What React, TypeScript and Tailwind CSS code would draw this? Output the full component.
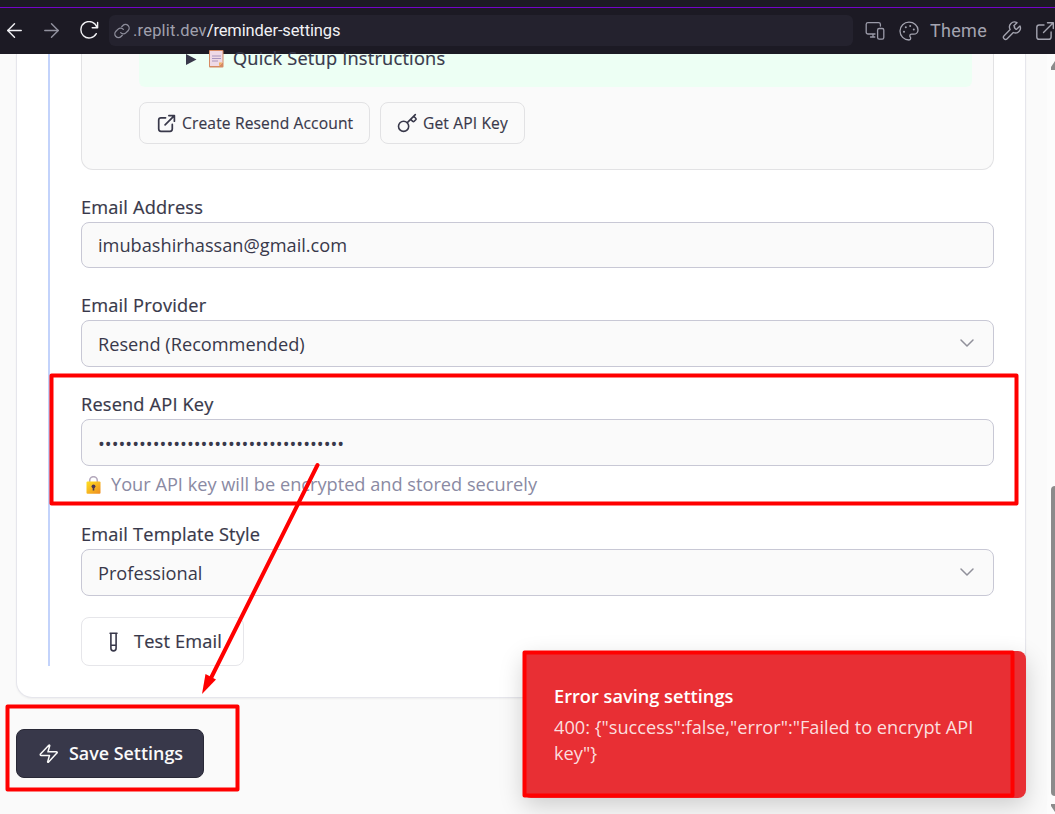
import type { ReactNode } from "react";
import {
  ArrowLeft,
  ArrowRight,
  ChevronDown,
} from "lucide-react";

function ReloadIcon() {
  return (
    <svg className="h-5 w-5" viewBox="0 0 20 20" fill="none" stroke="#f1f1f5" strokeWidth="1.4" strokeLinecap="round" strokeLinejoin="round">
      <path d="M18.600 1.500v5.200h-5.400M18 6.500A8.200 8.200 0 1 0 17.300 12.700" />
    </svg>
  );
}

function LinkIcon() {
  return (
    <svg className="h-4 w-4 shrink-0" viewBox="0 0 24 24" fill="none" stroke="#8c8c9a" strokeWidth="2" strokeLinecap="round">
      <path d="M10 14.5a5.4 5.4 0 0 0 7.8.3l3.3-3.3a5.4 5.4 0 0 0-7.7-7.7l-1.8 1.8" />
      <path d="M14 9.5a5.4 5.4 0 0 0-7.8-.3l-3.3 3.3a5.4 5.4 0 0 0 7.7 7.7l1.8-1.8" />
    </svg>
  );
}

function DevicesIcon() {
  return (
    <svg className="h-5 w-5 shrink-0" viewBox="0 0 20 20" fill="none" stroke="#9a9aa8" strokeWidth="1.3" strokeLinecap="round" strokeLinejoin="round">
      <path d="M10 13H3a1.8 1.8 0 0 1-1.8-1.8V3.3A1.8 1.8 0 0 1 3 1.6h10.600a1.800 1.800 0 0 1 1.800 1.700v1.700M8 13.2v2.6M5.500 16h4.300" />
      <rect x="12.600" y="7.500" width="6.200" height="10.600" rx="1.600" />
    </svg>
  );
}

function PaletteIcon() {
  return (
    <svg className="h-5 w-5 shrink-0" viewBox="0 0 20 20" fill="none" stroke="#a4a4b0" strokeWidth="1.3" strokeLinecap="round" strokeLinejoin="round">
      <path d="M10 1.200A8.900 8.900 0 0 0 1 10c0 5 4 9 9 9 1 0 1.700-.8 1.700-1.700 0-.5-.2-.9-.4-1.200-.3-.4-.5-.7-.5-1.200 0-1 .8-1.700 1.700-1.700h2.100c2.400 0 4.400-1.900 4.400-4.300C19 4.700 15 1.200 10 1.200Z" />
      <g fill="#a4a4b0" stroke="none">
        <circle cx="5" cy="10.800" r="1" />
        <circle cx="6.800" cy="6.300" r="1" />
        <circle cx="11.200" cy="5" r="1" />
        <circle cx="14.800" cy="8.600" r="1" />
      </g>
    </svg>
  );
}

function WrenchIcon() {
  return (
    <svg className="ml-[14px] h-5 w-5 shrink-0" viewBox="0 0 24 24" fill="none" stroke="currentColor" strokeWidth="1.600" strokeLinecap="round" strokeLinejoin="round">
      <path d="M15.500 7.300a1 1 0 0 0 0 1.400l1.200 1.200a1 1 0 0 0 1.400 0l3.800-3.800a6 6 0 0 1-8 7.900L6.500 21.500a2.100 2.100 0 0 1-3.700-3.700l7.300-7.400a6 6 0 0 1 8.200-8.200l-3.800 3.800Z" transform="translate(-.3 -.2)" />
    </svg>
  );
}

function ExternalIcon({ className }: { className: string }) {
  return (
    <svg className={className} viewBox="0 0 20 20" fill="none" stroke="currentColor" strokeLinecap="round" strokeLinejoin="round">
      <path d="M12.500 1.700h5.800v5.800M18 2 8.500 11.500M9 4H4.200a2.400 2.400 0 0 0-2.400 2.400v9.500a2.400 2.400 0 0 0 2.400 2.400h9.500a2.400 2.400 0 0 0 2.400-2.400V11" />
    </svg>
  );
}

function KeyIcon() {
  return (
    <svg className="h-5 w-5 shrink-0" viewBox="0 0 20 20" fill="none" stroke="currentColor" strokeWidth="1.600" strokeLinecap="round" strokeLinejoin="round">
      <circle cx="6.600" cy="13.300" r="5.100" />
      <path d="m10.300 9.600 8-8M13.600 6.300l2.100 2.100q.8.600 1.500-.1l1.500-1.500q.7-.8 0-1.500l-2-2" />
    </svg>
  );
}

function TubeIcon() {
  return (
    <svg className="h-5 w-3 shrink-0" viewBox="0 0 12 20" fill="none" stroke="currentColor" strokeWidth="1.600" strokeLinecap="round" strokeLinejoin="round">
      <path d="M3.100 1.200h6.900M3.900 1.500v14.800a2.600 2.600 0 0 0 5.200 0V1.500M3.900 13.300h5.200" />
    </svg>
  );
}

function BoltIcon() {
  return (
    <svg className="h-5 w-5 shrink-0" viewBox="0 0 20 20" fill="none" stroke="currentColor" strokeWidth="1.500" strokeLinejoin="round">
      <path d="M2.100 11.400c-.8 0-1.100-.7-.6-1.300L9.800 1.200c.5-.5 1.100-.1.900.5L9 7.800h8.200c.9 0 1.300.7.7 1.300l-8.300 9c-.4.500-1.100.1-.9-.5l1.800-6.200Z" />
    </svg>
  );
}

function ClipboardEmoji() {
  return (
    <svg className="h-[18px] w-[15px] shrink-0" viewBox="0 0 15 18">
      <rect x="0" y="0" width="14.500" height="17.500" rx="1" fill="#d68a62" />
      <path d="M1 1h12.500v11.500L10 16H1Z" fill="#efd9e5" />
      <path d="M10 16v-3.500h3.500Z" fill="#f4b25c" />
      <path d="M3 6h9M3 8.500h9M3 11h6" stroke="#a895bd" strokeWidth="1" />
    </svg>
  );
}

function LockEmoji() {
  return (
    <svg className="h-[18px] w-[15px] shrink-0" viewBox="0 0 15 18">
      <defs>
        <linearGradient id="lock-body" x1="0" y1="0" x2="1" y2="1">
          <stop offset="0" stopColor="#ffe11f" />
          <stop offset="1" stopColor="#ee8a22" />
        </linearGradient>
      </defs>
      <path d="M3.700 7V4.500a3.800 3.800 0 0 1 7.600 0V7" fill="none" stroke="#b5aabd" strokeWidth="1.600" />
      <rect x="0.500" y="5.600" width="14" height="12.200" rx="1" fill="url(#lock-body)" />
      <circle cx="7.500" cy="10.300" r="1.900" fill="#4a3553" />
      <path d="M6.700 10h1.600v4.500H6.700Z" fill="#4a3553" />
    </svg>
  );
}

function Label({ children }: { children: ReactNode }) {
  return <div className="h-[30px] whitespace-nowrap text-[18.200px] leading-[30px] font-medium tracking-[0.180px] [-webkit-text-stroke:0.200px_#38384a]">{children}</div>;
}

function Field({ children, select, className }: { children: ReactNode; select?: boolean; className: string }) {
  return (
    <div className={`flex items-center justify-between rounded-lg border border-[#c8c8d5] bg-[#fafafa] pr-[14px] pl-4 text-[18.200px] ${className}`}>
      <span className="whitespace-nowrap">{children}</span>
      {select && <ChevronDown className="-mt-[3px] h-6 w-6 text-[#90909a]" strokeWidth={1.500} />}
    </div>
  );
}

function Browser() {
  return (
    <header className="h-[54px] shrink-0 bg-[#1c1a24] pt-[7px]">
      <div className="h-px bg-[#7404c8]" />
      <div className="flex h-[45px] items-center overflow-hidden pl-[3px]">
        <ArrowLeft className="-mt-px h-[23px] w-[23px] shrink-0 text-[#f1f1f5]" strokeWidth={1.500} />
        <ArrowRight className="-mt-px ml-[14px] h-[23px] w-[23px] shrink-0 text-[#92929f]" strokeWidth={1.500} />
        <div className="ml-4 shrink-0"><ReloadIcon /></div>
        <div className="ml-[10px] flex h-[31px] w-[744px] shrink-0 items-center rounded-md bg-[#24222e] pl-[5px] whitespace-nowrap">
          <LinkIcon />
          <span className="mt-0.5 ml-[3px] font-['Roboto',sans-serif] text-[16.500px] tracking-[0.200px] text-[#a0a0ad]">.replit.dev</span>
          <span className="mt-0.5 font-['Roboto',sans-serif] text-[16.500px] tracking-[-0.120px] text-[#f1f1f5]">/reminder-settings</span>
        </div>
        <div className="ml-3 flex shrink-0 items-center text-[#a4a4b0]">
          <DevicesIcon />
          <div className="ml-[14px]"><PaletteIcon /></div>
          <span className="ml-[11px] w-[58px] font-['Roboto',sans-serif] text-[18px] tracking-[0.300px]">Theme</span>
          <WrenchIcon />
          <ExternalIcon className="ml-[13px] h-5 w-5 stroke-[1.400]" />
        </div>
      </div>
    </header>
  );
}

function SetupCard() {
  return (
    <div className="h-[116px] rounded-b-xl border border-t-0 border-[#e2e2e4] bg-[#fafafa] pr-[21px] pl-[57px]">
      <div className="flex h-[33px] items-start rounded-b-md bg-[#edfff4] pl-[47px]">
        <svg className="h-[11px] w-[11px]" viewBox="0 0 11 11"><path d="M0 0v11l10.500-5.500Z" fill="#38384a" /></svg>
        <div className="-mt-1 ml-3"><ClipboardEmoji /></div>
        <span className="-mt-2 ml-[9px] text-[18.200px] leading-6 font-medium tracking-[0.220px] [-webkit-text-stroke:0.200px_#38384a]">Quick Setup Instructions</span>
      </div>
      <div className="mt-[15px] flex gap-[10px] text-[15.600px] font-medium tracking-[0.130px] whitespace-nowrap [-webkit-text-stroke:0.150px_#38384a]">
        <div className="flex h-[42px] w-[231px] items-center rounded-lg border border-[#e2e2e4] pl-[17px]">
          <ExternalIcon className="h-[19px] w-[19px] shrink-0 stroke-[1.800]" />
          <span className="mt-px ml-[6px]">Create Resend Account</span>
        </div>
        <div className="flex h-[42px] w-[145px] items-center rounded-lg border border-[#e2e2e4] pl-4">
          <KeyIcon />
          <span className="mt-px ml-[6px]">Get API Key</span>
        </div>
      </div>
    </div>
  );
}

function Annotations() {
  return (
    <svg className="pointer-events-none absolute inset-0 h-[814px] w-[1055px]" viewBox="0 0 1055 814" fill="none" stroke="#ff0000" strokeWidth="4" strokeLinejoin="round" strokeLinecap="round">
      <rect x="51.500" y="375.500" width="965" height="128" />
      <rect x="7.500" y="706.500" width="230" height="83" />
      <rect x="524.500" y="652.500" width="488" height="143" />
      <path d="M317.500 465 210 680" />
      <path d="m202 694 3.500-20 10.500 5.500Z" fill="#ff0000" stroke="none" />
    </svg>
  );
}

export default function App() {
  return (
    <div className="relative flex h-[814px] w-[1055px] flex-col overflow-hidden bg-[#fafafa] font-['Open_Sans','Noto_Sans',sans-serif] text-[#38384a]">
      <Browser />
      <div className="flex min-h-0 flex-1">
        <main className="w-[1047px] pl-4">
          <section className="h-[644px] w-[1010px] rounded-b-2xl border border-t-0 border-[#e6e6ec] bg-white pr-[31px] pl-[31px] shadow-xs">
            <div className="h-[612px] border-l-2 border-[#c3d3fb] pl-[31px]">
              <SetupCard />
              <div className="mt-[22px]">
                <Label>Email Address</Label>
                <Field className="h-[46px] pt-[2px]">imubashirhassan@gmail.com</Field>
              </div>
              <div className="mt-[22px]">
                <Label>Email Provider</Label>
                <Field className="h-[47px] pt-[2px]" select>Resend (Recommended)</Field>
              </div>
              <div className="mt-[22px]">
                <Label>Resend API Key</Label>
                <Field className="h-[47px] pt-[4px]">••••••••••••••••••••••••••••••••••••</Field>
                <div className="flex h-[37px] items-center pl-[5px] text-[18.200px] text-[#8a8aa3]">
                  <LockEmoji />
                  <span className="ml-[10px]">Your API key will be encrypted and stored securely</span>
                </div>
              </div>
              <div className="mt-4">
                <Label>Email Template Style</Label>
                <Field className="h-[47px] pt-[2px]" select>Professional</Field>
              </div>
              <div className="mt-[21px] flex h-[49px] w-[163px] items-center rounded-lg border border-[#e6e6ea] pl-[25px] text-[18.200px] font-medium tracking-[0.160px] whitespace-nowrap [-webkit-text-stroke:0.200px_#38384a]">
                <TubeIcon />
                <span className="ml-[15px]">Test Email</span>
              </div>
            </div>
          </section>
          <div className="mt-[31px] flex h-[49px] w-[188px] items-center rounded-lg border border-[#292937] bg-[#38384a] pl-[22px] text-[17.900px] font-semibold whitespace-nowrap text-[#fafafa]">
            <BoltIcon />
            <span className="ml-[10px]">Save Settings</span>
          </div>
        </main>
        <div className="flex w-2 flex-col bg-[#fcfcfc] pl-1">
          <svg className="mt-[7px] h-[9px] w-1" viewBox="0 0 4 9"><path d="M0 9V6l4-6v9Z" fill="#8b8b8b" /></svg>
          <div className="mt-[416px] h-[310px] rounded-l-md bg-[#8b8b8b]" />
          <svg className="mt-2 h-[10px] w-1" viewBox="0 0 4 10"><path d="M0 0h4v8L0 2Z" fill="#8b8b8b" /></svg>
        </div>
      </div>
      <div role="alert" className="absolute top-[651px] left-[523px] h-[147px] w-[503px] rounded-lg bg-[#e82f34] pt-8 pl-[31px] whitespace-nowrap text-white shadow-[0_8px_24px_rgba(0,0,0,0.18)]">
        <div className="text-[18.200px] leading-[26px] font-semibold">Error saving settings</div>
        <div className="mt-[5px] text-[18.200px] leading-[26px] text-[#fbdede]">
          400: {'{"success":false,"error":"Failed to encrypt API'}
          <br />
          {'key"}'}
        </div>
      </div>
      <Annotations />
    </div>
  );
}
